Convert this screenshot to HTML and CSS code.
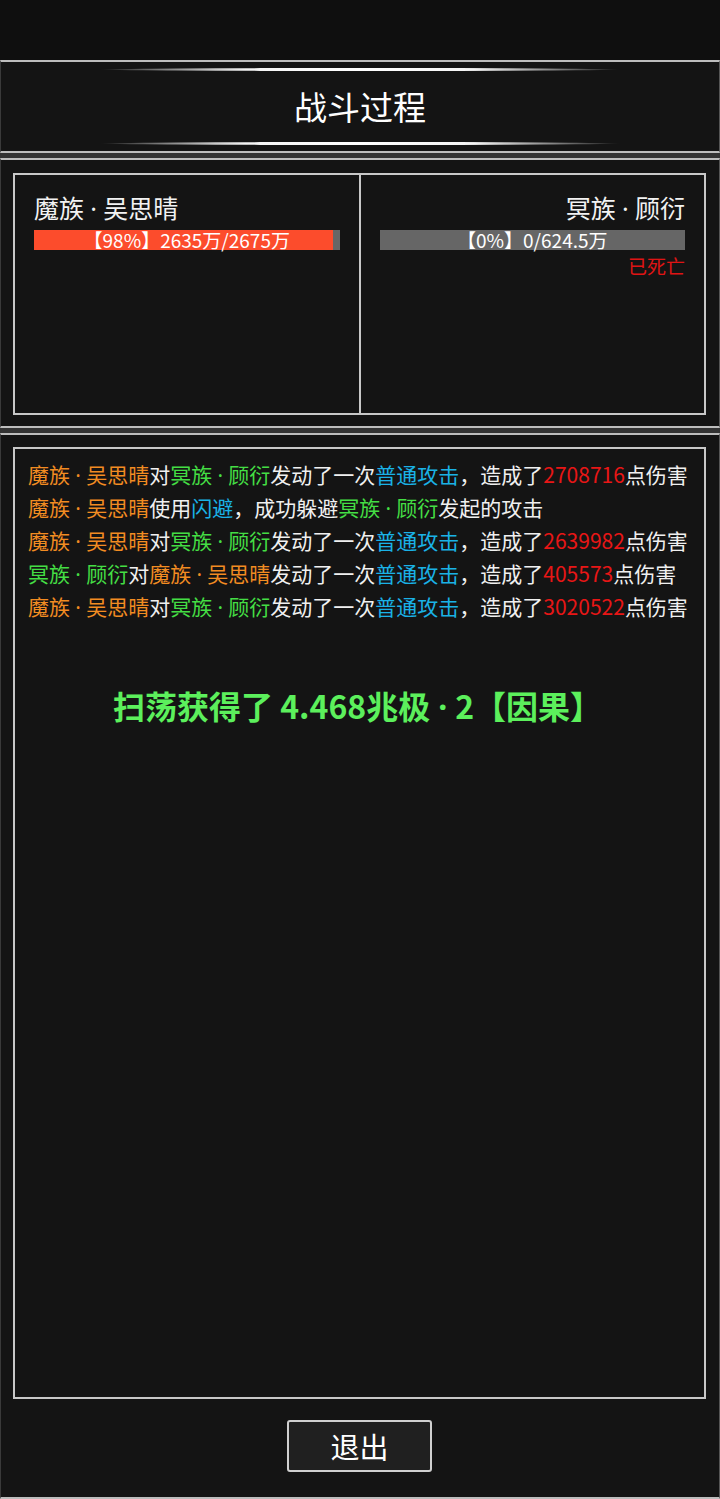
FILE: index.html
```html
<!DOCTYPE html>
<html lang="zh-CN">
<head>
<meta charset="utf-8">
<title>战斗过程</title>
<link rel="stylesheet" href="styles.css">
</head>
<body>
<div class="topbar"></div>
<section class="panel header">
  <div class="glow"></div>
  <h1 class="title">战斗过程</h1>
  <div class="glow"></div>
</section>
<div class="sep"></div>
<section class="panel fighters">
  <div class="fbox">
    <div class="fcell left">
      <div class="fname">魔族<span class="dot">·</span>吴思晴</div>
      <div class="hpbar"><div class="hpfill" style="width:98%"></div><span class="hptext">【98%】2635万/2675万</span></div>
    </div>
    <div class="divider"></div>
    <div class="fcell right">
      <div class="fname">冥族<span class="dot">·</span>顾衍</div>
      <div class="hpbar"><div class="hpfill" style="width:0%"></div><span class="hptext">【0%】0/624.5万</span></div>
      <div class="dead">已死亡</div>
    </div>
  </div>
</section>
<div class="sep"></div>
<section class="panel logpanel">
  <div class="logbox">
    <p class="line"><span class="o">魔族<span class="dot">·</span>吴思晴</span>对<span class="g">冥族<span class="dot">·</span>顾衍</span>发动了一次<span class="b">普通攻击</span>，造成了<span class="r">2708716</span>点伤害</p>
    <p class="line"><span class="o">魔族<span class="dot">·</span>吴思晴</span>使用<span class="b">闪避</span>，成功躲避<span class="g">冥族<span class="dot">·</span>顾衍</span>发起的攻击</p>
    <p class="line"><span class="o">魔族<span class="dot">·</span>吴思晴</span>对<span class="g">冥族<span class="dot">·</span>顾衍</span>发动了一次<span class="b">普通攻击</span>，造成了<span class="r">2639982</span>点伤害</p>
    <p class="line"><span class="g">冥族<span class="dot">·</span>顾衍</span>对<span class="o">魔族<span class="dot">·</span>吴思晴</span>发动了一次<span class="b">普通攻击</span>，造成了<span class="r">405573</span>点伤害</p>
    <p class="line"><span class="o">魔族<span class="dot">·</span>吴思晴</span>对<span class="g">冥族<span class="dot">·</span>顾衍</span>发动了一次<span class="b">普通攻击</span>，造成了<span class="r">3020522</span>点伤害</p>
    <p class="result">扫荡获得了 4.468兆极<span class="dot">·</span>2【因果】</p>
  </div>
  <div class="actions">
    <button class="exit">退出</button>
  </div>
</section>
</body>
</html>
```

FILE: styles.css
```css
html, body {
  margin: 0;
  padding: 0;
}
body {
  background: #101010;
  width: 720px;
  font-family: "Noto Sans CJK SC", "Noto Sans", sans-serif;
  color: #f0f0f0;
}
.topbar {
  height: 60px;
  background: #0f0f0f;
}
.panel {
  background: #141414;
  border-top: 2px solid #bdbdbd;
  border-bottom: 2px solid #bdbdbd;
  border-left: 1px solid #3a3a3a;
  border-right: 1px solid #555;
}
.sep {
  height: 5px;
  background: #333;
}
.dot {
  font-family: "Noto Sans", "DejaVu Sans", sans-serif;
  padding: 0 0.25em;
}
.header {
  display: flex;
  flex-direction: column;
  align-items: center;
  padding-top: 6px;
  box-sizing: border-box;
  height: 93px;
}
.glow {
  width: 520px;
  height: 3px;
  border-radius: 50%;
  background: linear-gradient(90deg, rgba(255,255,255,0) 0%, rgba(200,200,200,0.5) 10%, #f4f4f4 28%, #ffffff 50%, #f4f4f4 72%, rgba(200,200,200,0.5) 90%, rgba(255,255,255,0) 100%);
}
.title {
  margin: 0;
  height: 71px;
  line-height: 71px;
  font-size: 33px;
  font-weight: normal;
  color: #ffffff;
}
.fighters {
  padding: 13px 13px 11px 12px;
}
.fbox {
  border: 2px solid #c8c8c8;
  height: 238px;
  display: flex;
}
.divider {
  width: 2px;
  background: #c8c8c8;
}
.fcell {
  flex: 1;
  padding: 17px 19px 0 19px;
}
.fcell.right {
  text-align: right;
}
.fname {
  font-size: 25px;
  line-height: 30px;
  color: #f2f2f2;
}
.hpbar {
  position: relative;
  margin-top: 7px;
  height: 20px;
  background: #666;
  text-align: center;
}
.hpfill {
  position: absolute;
  left: 0;
  top: 0;
  bottom: 0;
  background: #fc4c2c;
}
.hptext {
  position: relative;
  font-size: 19px;
  line-height: 20px;
  color: #ffffff;
  display: block;
}
.dead {
  margin-top: 6px;
  font-size: 19px;
  line-height: 20px;
  color: #e01414;
}
.logpanel {
  padding: 12px 13px 0 12px;
  height: 1066px;
  box-sizing: border-box;
}
.logbox {
  border: 2px solid #c8c8c8;
  height: 952px;
  box-sizing: border-box;
  padding: 9px 0 0 13px;
}
.line {
  margin: 0;
  font-size: 21px;
  line-height: 32px;
  white-space: nowrap;
  color: #f0f0f0;
}
.o { color: #f28c22; }
.g { color: #44de44; }
.b { color: #1ab2e6; }
.r { color: #e81616; }
.result {
  margin: 62px 0 0 0;
  padding-right: 17px;
  text-align: center;
  font-size: 32px;
  line-height: 40px;
  font-weight: bold;
  color: #5cf05c;
}
.actions {
  display: flex;
  justify-content: center;
  padding-top: 21px;
}
.exit {
  width: 145px;
  height: 52px;
  background: #202020;
  border: 2px solid #d0d0d0;
  border-radius: 3px;
  color: #ffffff;
  font-family: "Noto Sans CJK SC", "Noto Sans", sans-serif;
  font-size: 29px;
  padding: 0;
}
```
